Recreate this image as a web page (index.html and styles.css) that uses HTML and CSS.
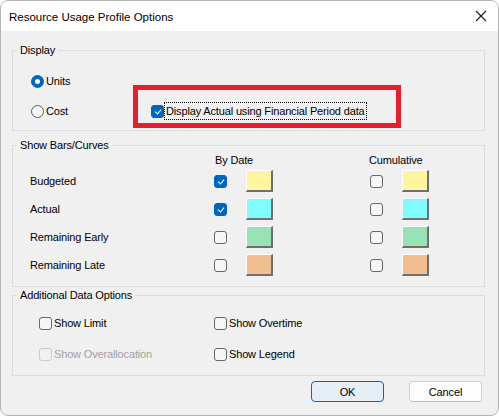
FILE: index.html
```html
<!DOCTYPE html>
<html lang="en">
<head>
    <meta charset="UTF-8">
    <title>Resource Usage Profile Options</title>
    <link rel="stylesheet" href="styles.css">
</head>
<body>
    <div class="window">
        <div class="titlebar">
            <span class="title">Resource Usage Profile Options</span>
            <svg class="close" width="12" height="12" viewBox="0 0 12 12">
                <path d="M1 1 L11 11 M11 1 L1 11" stroke="#1a1a1a" stroke-width="1.1" fill="none"/>
            </svg>
        </div>

        <div class="content">
            <fieldset class="group">
                <legend>Display</legend>
                <div class="group-body display-body">
                    <div class="display-row">
                        <label class="radio"><span class="radio-mark checked"></span>Units</label>
                    </div>
                    <div class="display-row">
                        <label class="radio"><span class="radio-mark"></span>Cost</label>
                        <label class="check"><span class="box checked"></span><span class="focus-text">Display Actual using Financial Period data</span></label>
                    </div>
                </div>
            </fieldset>

            <fieldset class="group bars-group">
                <legend>Show Bars/Curves</legend>
                <div class="group-body bars-body">
                    <div class="bars-head bydate">By Date</div>
                    <div class="bars-head cumulative">Cumulative</div>

                    <div class="bars-label">Budgeted</div>
                    <span class="box checked"></span>
                    <span class="swatch yellow"></span>
                    <span class="box"></span>
                    <span class="swatch yellow"></span>

                    <div class="bars-label">Actual</div>
                    <span class="box checked"></span>
                    <span class="swatch cyan"></span>
                    <span class="box"></span>
                    <span class="swatch cyan"></span>

                    <div class="bars-label">Remaining Early</div>
                    <span class="box"></span>
                    <span class="swatch green"></span>
                    <span class="box"></span>
                    <span class="swatch green"></span>

                    <div class="bars-label">Remaining Late</div>
                    <span class="box"></span>
                    <span class="swatch orange"></span>
                    <span class="box"></span>
                    <span class="swatch orange"></span>
                </div>
            </fieldset>

            <fieldset class="group extra-group">
                <legend>Additional Data Options</legend>
                <div class="group-body extra-body">
                    <label class="check"><span class="box"></span>Show Limit</label>
                    <label class="check"><span class="box"></span>Show Overtime</label>
                    <label class="check disabled"><span class="box"></span>Show Overallocation</label>
                    <label class="check"><span class="box"></span>Show Legend</label>
                </div>
            </fieldset>

            <div class="buttons">
                <button class="btn btn-default">OK</button>
                <button class="btn">Cancel</button>
            </div>
        </div>

        <!-- annotation drawn over the dialog -->
        <div class="highlight"></div>
    </div>
</body>
</html>
```

FILE: styles.css
```css
html, body {
    margin: 0;
    padding: 0;
    background-color: #ffffff;
}

body {
    font-family: "Liberation Sans", Arial, sans-serif;
    font-size: 11px;
    letter-spacing: -0.15px;
    color: #000;
}

.window {
    position: relative;
    width: 499px;
    height: 416px;
    box-sizing: border-box;
    border: 1px solid #b4b4b4;
    border-radius: 8px;
    background-color: #f0f0f0;
    overflow: hidden;
}

.titlebar {
    height: 30px;
    background-color: #fff;
    display: flex;
    align-items: center;
    justify-content: space-between;
    padding: 0 11px 0 8px;
}

.title {
    font-size: 11.5px;
    letter-spacing: 0;
    padding-top: 1px;
}

.close {
    display: block;
}

.content {
    padding: 11px 13px 0 11px;
}

.group {
    margin: 0;
    padding: 0;
    border: 1px solid #dcdcdc;
    min-width: 0;
}

.group legend {
    padding: 0 3px;
    margin-left: 4px;
    line-height: 16px;
}

.bars-group {
    margin-top: 6px;
}

/* display box */
.display-body {
    padding: 13px 0 9px 18px;
    display: flex;
    flex-direction: column;
    gap: 10px;
}

.display-row {
    height: 20px;
    display: grid;
    grid-template-columns: 120px auto;
    align-items: center;
}

.radio, .check {
    display: flex;
    align-items: center;
    white-space: nowrap;
}

.radio-mark {
    width: 13px;
    height: 13px;
    box-sizing: border-box;
    border: 1px solid #5d5d5d;
    border-radius: 50%;
    background-color: #f7f7f7;
    margin-right: 2px;
    position: relative;
}

.radio-mark.checked {
    background-color: #0067c0;
    border-color: #0067c0;
}

.radio-mark.checked::after {
    content: "";
    position: absolute;
    left: 3px;
    top: 3px;
    width: 5px;
    height: 5px;
    border-radius: 50%;
    background-color: #fff;
}

.box {
    width: 13px;
    height: 13px;
    box-sizing: border-box;
    border: 1px solid #676767;
    border-radius: 3px;
    background-color: #f6f6f6;
    position: relative;
    flex-shrink: 0;
}

.box.checked {
    background-color: #0067c0;
    border-color: #0067c0;
}

.box.checked::after {
    content: "";
    position: absolute;
    left: 4px;
    top: 2px;
    width: 3px;
    height: 5px;
    border-right: 1px solid #fff;
    border-bottom: 1px solid #fff;
    transform: rotate(40deg);
}

.check .box {
    margin-right: 2px;
}

.focus-text {
    margin-left: -1px;
    padding: 0 1px;
    line-height: 16px;
    outline: 1px dotted #000;
}

.check.disabled {
    color: #a0a0a0;
}

.check.disabled .box {
    border-color: #cccccc;
    background-color: #f0f0f0;
}

/* bars box */
.bars-body {
    display: grid;
    grid-template-columns: 184px 32px 124px 32px 27px;
    grid-template-rows: 14px repeat(4, 28px);
    align-items: center;
    padding: 0 0 7px 17px;
}

.bars-head {
    line-height: 14px;
}

.bydate {
    grid-column: 2 / 4;
    padding-left: 1px;
}

.cumulative {
    grid-column: 4 / 6;
    margin-left: -1px;
}

.bars-label {
    grid-column: 1;
}

.swatch {
    width: 27px;
    height: 22px;
    box-sizing: border-box;
    border-top: 1px solid #ffffff;
    border-left: 1px solid #ffffff;
    border-right: 2px solid #6f6f6f;
    border-bottom: 2px solid #6f6f6f;
}

.yellow { background-color: #fff59e; }
.cyan { background-color: #80fbff; }
.green { background-color: #98e2b6; }
.orange { background-color: #f1be8f; }

/* additional options */
.extra-body {
    display: grid;
    grid-template-columns: 175px auto;
    grid-auto-rows: 20px;
    row-gap: 11px;
    align-items: center;
    padding: 10px 0 11px 26px;
}

.buttons {
    display: flex;
    justify-content: flex-end;
    gap: 25px;
    margin-top: 5px;
    padding-right: 3px;
}

.btn {
    width: 73px;
    height: 21px;
    box-sizing: border-box;
    border: 1px solid #d0d0d0;
    border-bottom-color: #bcbcbc;
    border-radius: 4px;
    background-color: #fdfdfd;
    font-family: inherit;
    font-size: 11px;
    letter-spacing: -0.15px;
    color: #000;
    padding: 0;
}

.btn-default {
    border: 1px solid #0067c0;
    background-color: #e6eef6;
}

.highlight {
    position: absolute;
    left: 132px;
    top: 84px;
    width: 268px;
    height: 43px;
    box-sizing: border-box;
    border: 5px solid #e3202b;
}
```
